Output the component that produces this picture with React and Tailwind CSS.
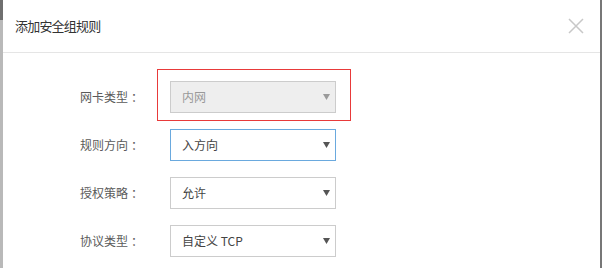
import React from 'react';

const font = { fontFamily: '"Noto Sans CJK SC", "Noto Sans", sans-serif' };

function Arrow({ muted }) {
  return (
    <svg width="7" height="6" viewBox="0 0 7 6" className="shrink-0">
      <path d="M0 0 H7 L3.5 6 Z" fill={muted ? '#9a9a9a' : '#555555'} />
    </svg>
  );
}

function Select({ value, disabled, focused }) {
  const border = focused ? 'border-[#6aa9de]' : 'border-[#cccccc]';
  const bg = disabled ? 'bg-[#eeeeee]' : 'bg-white';
  const color = disabled ? 'text-[#999999]' : 'text-[#444444]';
  return (
    <div className={`w-[166px] h-[32px] border ${border} ${bg} flex items-center justify-between pl-[11px] pr-[5px]`}>
      <span className={`text-[12px] ${color}`}>{value}</span>
      <Arrow muted={disabled} />
    </div>
  );
}

function Row({ label, children }) {
  return (
    <div className="flex items-center h-[32px]">
      <div className="w-[90px] text-[12px] text-[#5a5a5a] shrink-0">
        {label}
        <span className="ml-[3px]">：</span>
      </div>
      {children}
    </div>
  );
}

export default function App() {
  return (
    <div className="w-[602px] h-[268px] flex bg-[#b5b5b5] overflow-hidden" style={font}>
      <div className="w-[3px] flex flex-col">
        <div className="h-[20px] bg-[#6f6f6f]" />
        <div className="flex-1 bg-[#b9b9b9]" />
      </div>
      <div className="flex-1 bg-white flex flex-col">
        <div className="h-[53px] border-b border-[#e5e5e5] flex items-center justify-between pl-[12px] pr-[16px]">
          <h3 className="text-[13px] text-[#333333] tracking-[-0.8px]">添加安全组规则</h3>
          <svg width="16" height="16" viewBox="0 0 16 16">
            <path d="M1 1 L15 15 M15 1 L1 15" stroke="#c8c8c8" strokeWidth="1.5" />
          </svg>
        </div>
        <div className="flex flex-col gap-[16px] pt-[28px] pl-[77px]">
          <div className="relative">
            <Row label="网卡类型">
              <Select value="内网" disabled />
            </Row>
            <div className="absolute left-[77px] top-[-12px] w-[194px] h-[52px] border border-[#e83a3a] pointer-events-none" />
          </div>
          <Row label="规则方向">
            <Select value="入方向" focused />
          </Row>
          <Row label="授权策略">
            <Select value="允许" />
          </Row>
          <Row label="协议类型">
            <Select value="自定义 TCP" />
          </Row>
        </div>
      </div>
      <div className="w-[2px] bg-[#777777]" />
    </div>
  );
}
